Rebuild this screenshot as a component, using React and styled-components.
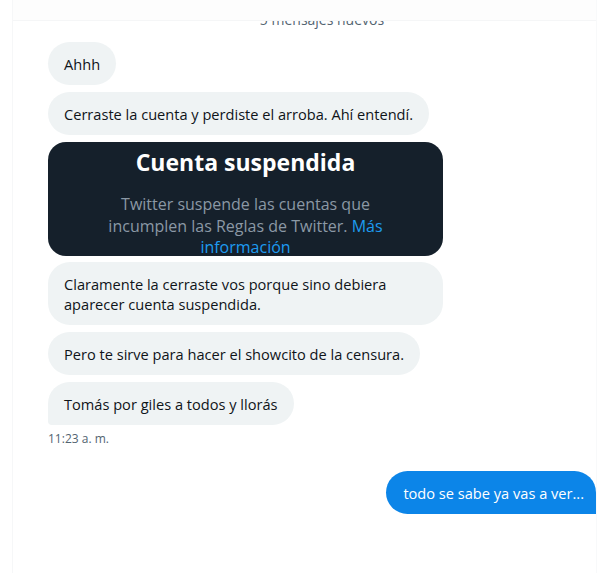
import React from "react";
import styled, { createGlobalStyle } from "styled-components";

const GlobalStyle = createGlobalStyle`
  html, body {
    margin: 0;
    padding: 0;
    background: #ffffff;
  }
  body {
    font-family: "Open Sans", "Noto Sans", "Liberation Sans", sans-serif;
    -webkit-font-smoothing: antialiased;
  }
`;

const messages = [
  { id: 1, text: "Ahhh" },
  { id: 2, text: "Cerraste la cuenta y perdiste el arroba. Ahí entendí." },
  { id: 3, card: true },
  {
    id: 4,
    text: "Claramente la cerraste vos porque sino debiera aparecer cuenta suspendida.",
  },
  { id: 5, text: "Pero te sirve para hacer el showcito de la censura." },
  { id: 6, text: "Tomás por giles a todos y llorás", last: true },
];

const App = () => {
  return (
    <>
      <GlobalStyle />
      <Frame>
        <Gutter />
        <Column>
          <TopBar />
          <Thread>
            <NewLabel>5 mensajes nuevos</NewLabel>
            <Incoming>
              {messages.map((m) =>
                m.card ? (
                  <SuspendedCard key={m.id}>
                    <h3>Cuenta suspendida</h3>
                    <p>
                      Twitter suspende las cuentas que incumplen las Reglas de
                      Twitter. <a href="#">Más información</a>
                    </p>
                  </SuspendedCard>
                ) : (
                  <Bubble key={m.id} $last={m.last}>
                    {m.text}
                  </Bubble>
                )
              )}
            </Incoming>
            <Time>11:23 a. m.</Time>
            <Outgoing>todo se sabe ya vas a ver...</Outgoing>
          </Thread>
        </Column>
      </Frame>
    </>
  );
};

const Frame = styled.div`
  width: 615px;
  height: 573px;
  display: flex;
  overflow: hidden;
  background: #ffffff;
`;

const Gutter = styled.div`
  width: 12px;
  flex-shrink: 0;
`;

const Column = styled.div`
  width: 583px;
  flex-shrink: 0;
  display: flex;
  flex-direction: column;
  border-left: 1px solid #f6f7f8;
  border-right: 1px solid #f8f9fa;
  overflow: hidden;
`;

const TopBar = styled.div`
  height: 20px;
  flex-shrink: 0;
  background: #fdfdfd;
  border-bottom: 1px solid #f5f6f7;
`;

const Thread = styled.div`
  flex: 1;
  display: flex;
  flex-direction: column;
  padding-left: 35px;
  overflow: hidden;
`;

const NewLabel = styled.div`
  margin-top: -11px;
  height: 20px;
  line-height: 20px;
  font-size: 14px;
  color: #536471;
  text-align: center;
  margin-bottom: 12px;
`;

const Incoming = styled.div`
  display: flex;
  flex-direction: column;
  align-items: flex-start;
  gap: 7px;
  max-width: 395px;
`;

const Bubble = styled.div`
  background: #eff3f4;
  color: #0f1419;
  font-size: 14.6px;
  line-height: 20px;
  padding: 11.5px 16px;
  border-radius: 22px;
  border-bottom-left-radius: ${(p) => (p.$last ? "4px" : "22px")};
  max-width: 363px;
`;

const SuspendedCard = styled.div`
  width: 395px;
  height: 114px;
  box-sizing: border-box;
  background: #15202b;
  border-radius: 18px;
  overflow: hidden;
  text-align: center;
  padding: 5px 40px 0;
  margin-bottom: -1px;

  h3 {
    margin: 0;
    color: #ffffff;
    font-size: 23px;
    font-weight: 700;
    line-height: 30px;
  }
  p {
    margin: 17px 0 0;
    color: #8b98a5;
    font-size: 16px;
    line-height: 21.5px;
  }
  a {
    color: #1d9bf0;
    text-decoration: none;
  }
`;

const Time = styled.div`
  margin-top: 6px;
  font-size: 12px;
  line-height: 16px;
  color: #536471;
`;

const Outgoing = styled.div`
  align-self: flex-end;
  margin-top: 24px;
  background: #0c85e8;
  color: #ffffff;
  font-size: 14.6px;
  line-height: 20px;
  padding: 11.5px 12px 11.5px 17px;
  border-radius: 22px 22px 0 22px;
`;

export default App;
